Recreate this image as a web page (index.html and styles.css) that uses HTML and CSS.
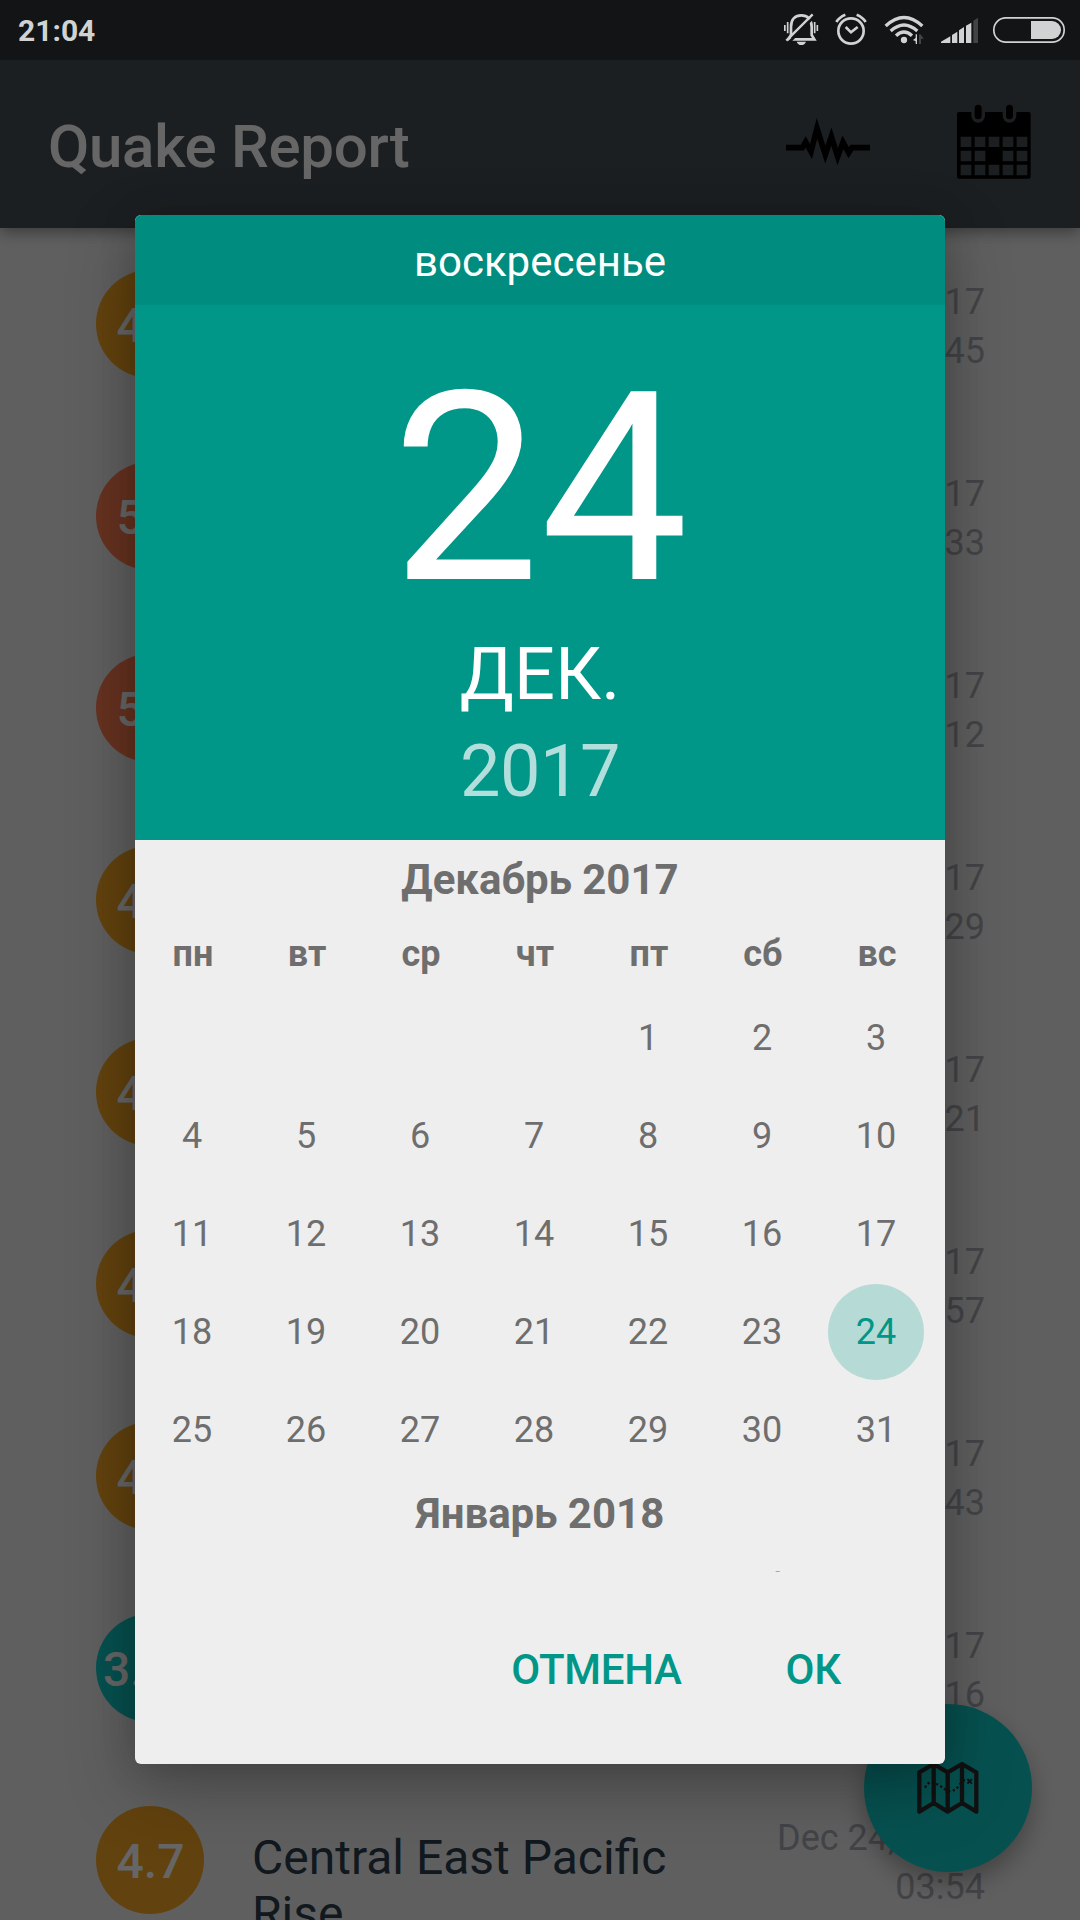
FILE: index.html
```html
<!DOCTYPE html>
<html lang="ru">
<head>
<meta charset="utf-8">
<title>Quake Report</title>
<link rel="stylesheet" href="styles.css">
</head>
<body>
<div class="screen">
  <header class="status-bar">
    <span class="clock">21:04</span>
    <div class="status-icons">
      <svg width="47" height="60" viewBox="60 0 141 180" fill="none">
        <path class="line" stroke-width="8" d="M84 118H163L155 105V80C155 57 142 46 124 46S93 57 93 80V105L86 116"/>
        <path class="line" stroke-width="5" d="M74.500 75V93M83 66V100M164 66V100M172 75V93"/>
        <path class="gap" d="M164 48L88 126"/>
        <path class="line" stroke-width="7" d="M158 43L79 122"/>
        <path class="solid" d="M110 125H138Q134 135 124 135T110 125Z"/>
      </svg>
      <svg width="50" height="60" viewBox="201 0 150 180" fill="none">
        <circle class="line" stroke-width="8" cx="273" cy="93" r="38"/>
        <path class="line" stroke-width="8" d="M257 81L273 97L293 81M229 66Q237 52 256 44M290 44Q309 52 317 66"/>
      </svg>
      <svg width="53" height="60" viewBox="351 0 159 180" fill="none">
        <path class="line" stroke-width="10" d="M377 78Q432 27 487 78M392 93Q432 57 472 93M408 107Q432 85 456 107"/>
        <circle class="solid" cx="432" cy="120" r="9.500"/>
        <path class="solid" d="M467 103H471V132H467V124L459 120L467 114Z"/>
        <path class="faint" d="M477 132V103H481L492 116H483V132Z"/>
      </svg>
      <svg width="57" height="60" viewBox="510 0 171 180">
        <path class="solid" d="M543 129V125L571 109V129ZM576 129V105L592 95V129ZM597 129V91L612 81V129ZM618 129V77L634 68V129Z"/>
        <path class="faint" d="M640 129V62L654 53V129Z"/>
      </svg>
      <svg width="93" height="60" viewBox="681 0 279 180" fill="none">
        <rect class="line" stroke-width="5" x="701.500" y="53.500" width="211" height="73" rx="36"/>
        <path class="solid" d="M813 63H876A27 27 0 0 1 876 117H813Z"/>
      </svg>
    </div>
  </header>

  <div class="app-bar">
    <h1 class="title">Quake Report</h1>
    <div class="actions">
      <svg width="84" height="60" viewBox="78 90 252 180" fill="none">
        <path d="M78 203H127L137 186L153 215L171 145L196 224L214 170L233 230L249 187L266 218L276 203H330" stroke="#000" stroke-width="17" stroke-miterlimit="10"/>
      </svg>
      <svg width="74" height="75" viewBox="592 73 222 225">
        <path fill="#000" fill-rule="evenodd" d="M598 97H807Q813 97 813 103V291Q813 297 807 297H598Q592 297 592 291V103Q592 97 598 97ZM603 171V202H635V171ZM645 171V202H677V171ZM687 171V202H719V171ZM729 171V202H761V171ZM771 171V202H803V171ZM603 213V245H635V213ZM645 213V245H677V213ZM729 213V245H761V213ZM771 213V245H803V213ZM603 255V287H635V255ZM645 255V287H677V255ZM687 255V287H719V255ZM729 255V287H761V255ZM771 255V287H803V255Z"/>
        <path fill="none" stroke="#464e53" stroke-width="41" stroke-linecap="round" d="M655.500 86V108.500M749.500 86V108.500"/>
        <path fill="none" stroke="#000" stroke-width="21" stroke-linecap="round" d="M655.500 86V108.500M749.500 86V108.500"/>
      </svg>
    </div>
  </div>

  <main class="quakes">
    <article class="quake"><span class="mag mag-4">4.5</span><p class="place"></p><p class="when">Dec 24, 2017<br>20:45</p></article>
    <article class="quake"><span class="mag mag-5">5.1</span><p class="place"></p><p class="when">Dec 24, 2017<br>19:33</p></article>
    <article class="quake"><span class="mag mag-5">5.0</span><p class="place"></p><p class="when">Dec 24, 2017<br>17:12</p></article>
    <article class="quake"><span class="mag mag-4">4.6</span><p class="place"></p><p class="when">Dec 24, 2017<br>15:29</p></article>
    <article class="quake"><span class="mag mag-4">4.4</span><p class="place"></p><p class="when">Dec 24, 2017<br>13:21</p></article>
    <article class="quake"><span class="mag mag-4">4.3</span><p class="place"></p><p class="when">Dec 24, 2017<br>10:57</p></article>
    <article class="quake"><span class="mag mag-4">4.8</span><p class="place"></p><p class="when">Dec 24, 2017<br>08:43</p></article>
    <article class="quake"><span class="mag mag-3">3.25</span><p class="place"></p><p class="when">Dec 24, 2017<br>06:16</p></article>
    <article class="quake"><span class="mag mag-4">4.7</span><p class="place">Central East Pacific Rise</p><p class="when">Dec 24, 2017<br>03:54</p></article>
  </main>

  <div class="fab">
    <svg width="62" height="54" viewBox="352 603 186 162" fill="none" stroke="#2b2b2b">
      <path stroke-width="13" stroke-linejoin="round" d="M359 637L402 612L444 637L487 612L530 637V755L487 729L444 755L402 729L359 755ZM402 612V729M444 637V755M487 612V729"/>
      <path stroke-width="7" stroke-dasharray="7 7" d="M376 683Q386 662 402 668T444 694Q466 695 480 675T500 663"/>
      <path stroke-width="6" d="M503 657L517 671M517 657L503 671"/>
    </svg>
  </div>

  <div class="scrim">
    <section class="dialog">
      <div class="weekday">воскресенье</div>
      <div class="selected-date">
        <div class="day">24</div>
        <div class="month">ДЕК.</div>
        <div class="year">2017</div>
      </div>
      <div class="months">
        <div class="month-block">
          <h2 class="month-name">Декабрь 2017</h2>
          <div class="week names"><span>пн</span><span>вт</span><span>ср</span><span>чт</span><span>пт</span><span>сб</span><span>вс</span></div>
          <div class="week"><span></span><span></span><span></span><span></span><span>1</span><span>2</span><span>3</span></div>
          <div class="week"><span>4</span><span>5</span><span>6</span><span>7</span><span>8</span><span>9</span><span>10</span></div>
          <div class="week"><span>11</span><span>12</span><span>13</span><span>14</span><span>15</span><span>16</span><span>17</span></div>
          <div class="week"><span>18</span><span>19</span><span>20</span><span>21</span><span>22</span><span>23</span><span class="picked">24</span></div>
          <div class="week"><span>25</span><span>26</span><span>27</span><span>28</span><span>29</span><span>30</span><span>31</span></div>
        </div>
        <div class="month-block">
          <h2 class="month-name">Январь 2018</h2>
          <div class="week names"><span>пн</span><span>вт</span><span>ср</span><span>чт</span><span>пт</span><span>сб</span><span>вс</span></div>
        </div>
      </div>
      <div class="buttons"><span>ОТМЕНА</span><span>ОК</span></div>
    </section>
  </div>
</div>
</body>
</html>
```

FILE: styles.css
```css
* { box-sizing: border-box; }
body {
  margin: 0;
  font-family: Roboto, "Noto Sans", sans-serif;
}
h1, h2, p { margin: 0; }
svg { display: block; }

.screen {
  position: relative;
  width: 1080px;
  height: 1920px;
  overflow: hidden;
  background: #eee;
  display: flex;
  flex-direction: column;
}

/* Status bar stays above the scrim */
.status-bar {
  position: relative;
  z-index: 5;
  flex: none;
  height: 60px;
  padding-left: 18px;
  background: #121415;
  color: #d0d3d2;
  display: flex;
  justify-content: space-between;
}
.clock {
  padding-top: 1px;
  font-size: 30px;
  line-height: 60px;
  font-weight: 700;
}
.status-icons { display: flex; }
.line { stroke: #d0d3d2; }
.solid { fill: #d0d3d2; }
.faint { fill: #414344; }
.gap { stroke: #121415; stroke-width: 8; }

.app-bar {
  position: relative;
  flex: none;
  height: 168px;
  padding: 0 49px 0 48px;
  background: #464e53;
  box-shadow: 0 4px 14px rgba(0, 0, 0, .4);
  display: flex;
  align-items: center;
  justify-content: space-between;
}
.title {
  padding-top: 5px;
  font-size: 60px;
  line-height: 70px;
  font-weight: 500;
  letter-spacing: -.3px;
  color: #fff;
}
.actions {
  padding-bottom: 5px;
  display: flex;
  align-items: center;
  gap: 87px;
}
.actions svg:first-child { margin-top: -3px; }

.quakes { flex: none; }
.quake {
  height: 192px;
  padding: 0 95px 0 96px;
  display: grid;
  grid-template-columns: 108px 1fr 208px;
}
.mag {
  align-self: center;
  height: 108px;
  padding-left: 1px;
  border-radius: 50%;
  font-size: 48px;
  line-height: 111px;
  font-weight: 500;
  text-align: center;
  color: #fff;
}
.mag-3 { background: #10cac9; }
.mag-4 { background: #f5a623; }
.mag-5 { background: #ff7d50; }
.place {
  padding: 66px 60px 0 48px;
  font-size: 48px;
  line-height: 56px;
  color: #2b3d4d;
}
.when {
  padding-top: 50px;
  font-size: 36px;
  line-height: 49px;
  text-align: right;
  white-space: nowrap;
  color: #a9abb3;
}

.fab {
  position: absolute;
  right: 48px;
  bottom: 48px;
  width: 168px;
  height: 168px;
  border-radius: 50%;
  background: #10cac9;
  box-shadow: 0 12px 24px rgba(0, 0, 0, .3);
  display: flex;
  align-items: center;
  justify-content: center;
}

.scrim {
  position: absolute;
  inset: 0;
  padding: 215px 135px 156px;
  background: rgba(0, 0, 0, .6);
}
.dialog {
  height: 1549px;
  border-radius: 6px;
  overflow: hidden;
  background: #eee;
  box-shadow: 0 24px 68px rgba(0, 0, 0, .26), 0 2px 36px rgba(0, 0, 0, .14);
  display: flex;
  flex-direction: column;
}
.weekday {
  height: 90px;
  padding-top: 3px;
  background: #008c7e;
  color: #fff;
  font-size: 42px;
  line-height: 87px;
  text-align: center;
}
.selected-date {
  height: 535px;
  padding-top: 50px;
  background: #009688;
  color: #fff;
  text-align: center;
}
.day {
  font-size: 264px;
  line-height: 268px;
}
.month, .year {
  font-size: 72px;
  line-height: 97px;
}
.month { margin-top: 3px; }
.year {
  letter-spacing: -.5px;
  color: #b2dfdb;
}

.months {
  height: 732px;
  padding-top: 5px;
  overflow: hidden;
  color: #6e6e6e;
}
.month-block { height: 634px; }
.month-name {
  font-size: 42px;
  line-height: 70px;
  font-weight: 700;
  text-align: center;
}
.week {
  width: 798px;
  display: grid;
  grid-template-columns: repeat(7, 1fr);
  justify-items: center;
  align-items: center;
  height: 98px;
  font-size: 36px;
}
.names {
  height: 74px;
  padding-top: 3px;
  margin-left: 1px;
  font-weight: 700;
}
.picked {
  width: 96px;
  height: 96px;
  border-radius: 50%;
  background: #b6dad6;
  color: #009688;
  line-height: 96px;
  text-align: center;
}

.buttons {
  height: 192px;
  padding: 3px 104px 0 0;
  display: flex;
  align-items: center;
  justify-content: flex-end;
  gap: 104px;
  color: #009688;
  font-size: 42px;
  font-weight: 500;
  letter-spacing: -.3px;
}
```
